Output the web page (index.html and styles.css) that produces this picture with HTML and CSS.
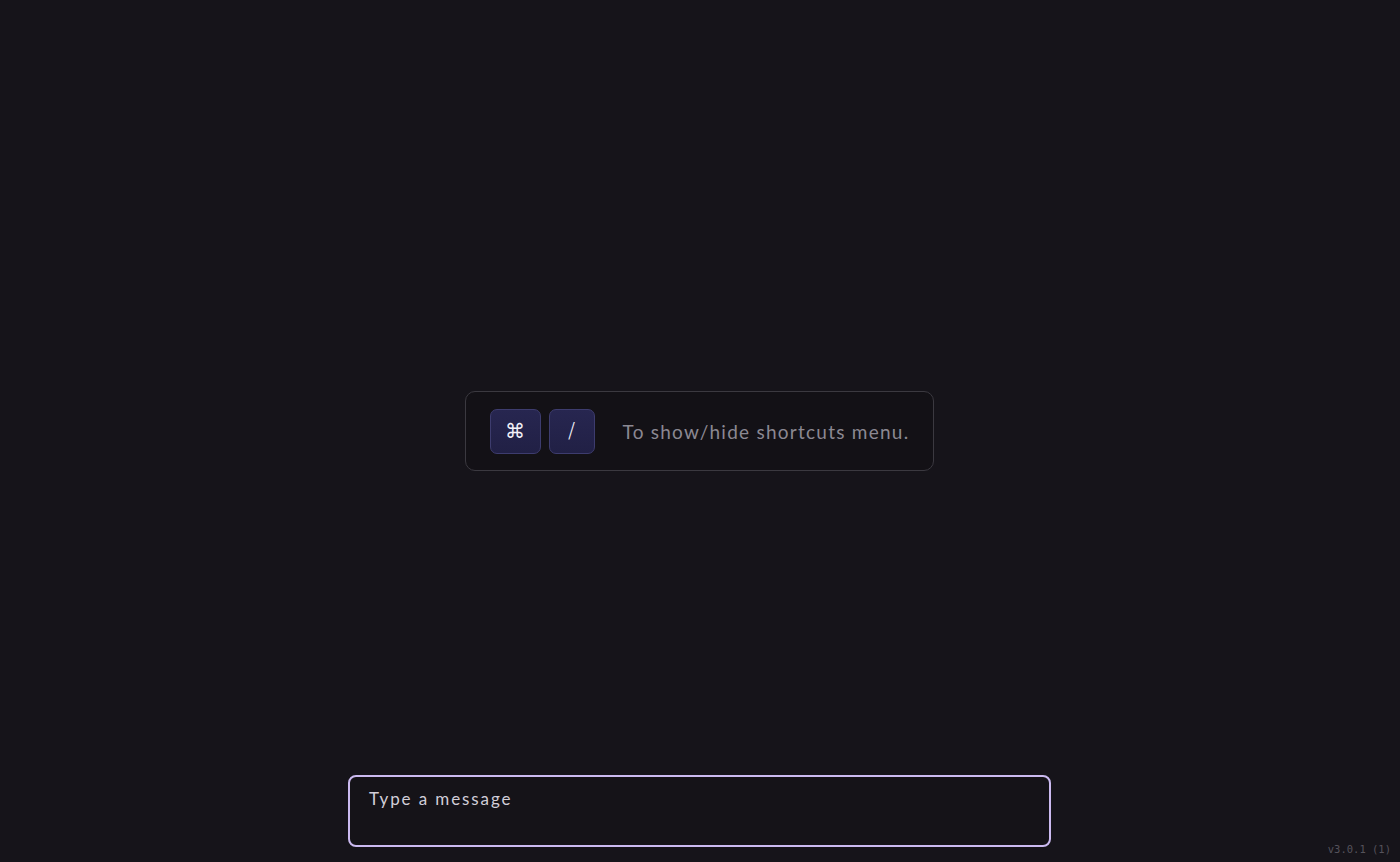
FILE: index.html
```html
<!DOCTYPE html>
<html lang="en">
<head>
<meta charset="utf-8">
<title>Chat</title>
<link rel="stylesheet" href="styles.css">
</head>
<body>
<div class="app">
  <main class="conversation"></main>
  <footer class="composer">
    <div class="input-box">
      <span class="placeholder">Type a message</span>
    </div>
  </footer>
  <div class="hint-layer">
    <div class="hint">
      <div class="keys">
        <span class="key key-cmd">⌘</span>
        <span class="key key-slash">/</span>
      </div>
      <span class="hint-text">To show/hide shortcuts menu.</span>
    </div>
  </div>
  <div class="version">v3.0.1 (1)</div>
</div>
</body>
</html>
```

FILE: styles.css
```css
* { box-sizing: border-box; }
html, body {
  margin: 0;
  padding: 0;
  height: 100%;
  background: #16141a;
  font-family: "Lato", "Noto Sans", sans-serif;
}
.app {
  position: relative;
  height: 100vh;
  display: flex;
  flex-direction: column;
}
.conversation { flex: 1; }
.composer {
  display: flex;
  justify-content: center;
  padding: 0 0 15px 0;
}
.input-box {
  width: 703px;
  height: 72px;
  margin-left: -1px;
  border: 2px solid #cbbaf0;
  border-radius: 8px;
  background: #151318;
  padding: 11px 19px;
}
.placeholder {
  color: #d2ced8;
  font-size: 17px;
  letter-spacing: 1.9px;
  white-space: nowrap;
}
.hint-layer {
  position: absolute;
  inset: 0;
  display: flex;
  align-items: center;
  justify-content: center;
  pointer-events: none;
}
.hint {
  width: 469px;
  height: 80px;
  border: 1px solid #3b3940;
  border-radius: 10px;
  background: #131116;
  display: flex;
  align-items: center;
  padding: 0 24px;
  margin-left: -2px;
}
.keys {
  display: flex;
  gap: 8px;
  margin-right: 28px;
  flex-shrink: 0;
}
.key {
  height: 45px;
  display: flex;
  align-items: center;
  justify-content: center;
  background: linear-gradient(#272650, #212045);
  border: 1px solid #3d3c6e;
  border-radius: 7px;
  color: #f2f0f8;
  font-family: "DejaVu Sans", sans-serif;
}
.key-cmd { width: 51px; font-size: 20px; }
.key-slash { width: 46px; font-size: 21px; font-weight: 300; }
.hint-text {
  color: #8b8892;
  font-size: 19px;
  letter-spacing: 1.25px;
  white-space: nowrap;
}
.version {
  position: absolute;
  right: 9px;
  bottom: 7px;
  font-family: "DejaVu Sans Mono", monospace;
  font-size: 10.5px;
  color: #55525b;
}
```
